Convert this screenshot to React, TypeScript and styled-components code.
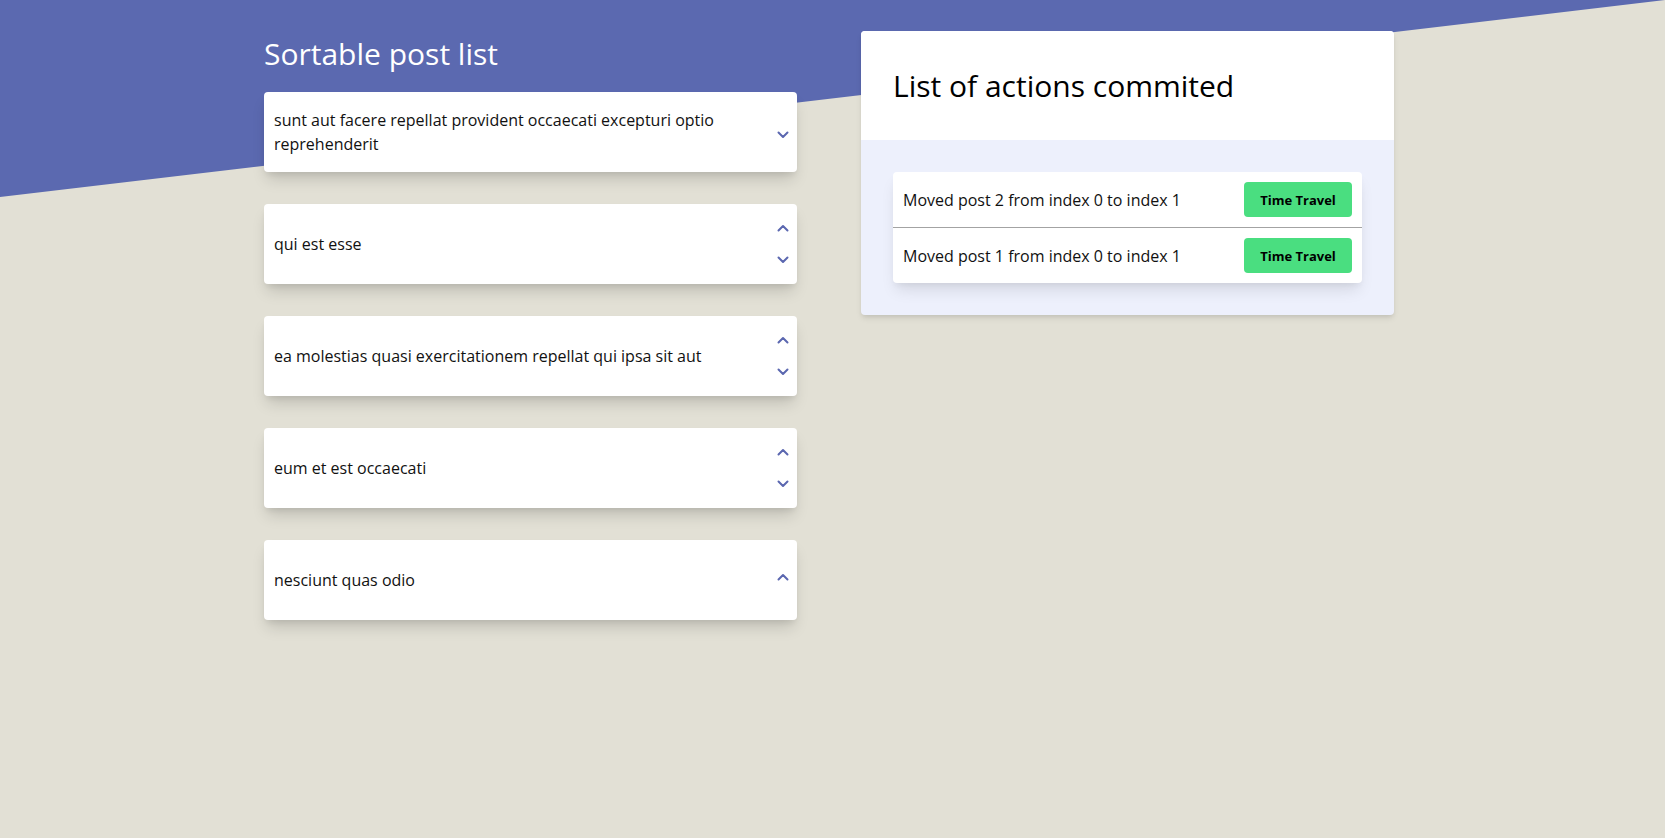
import React from "react";
import styled, { createGlobalStyle } from "styled-components";

const GlobalStyle = createGlobalStyle`
  *, *::before, *::after { box-sizing: border-box; }
  html, body { margin: 0; padding: 0; }
  body {
    background: #e2e0d5;
    font-family: "Open Sans", "Noto Sans", sans-serif;
    color: #111;
    min-height: 838px;
  }
`;

const Page = styled.div`
  position: relative;
  min-height: 838px;
  overflow: hidden;
  &::before {
    content: "";
    position: absolute;
    left: 0;
    top: 0;
    width: 100%;
    height: 197px;
    background: #5b69b0;
    clip-path: polygon(0 0, 100% 0, 0 100%);
    z-index: 0;
  }
`;

const Layout = styled.main`
  position: relative;
  z-index: 1;
  display: grid;
  grid-template-columns: 533px 533px;
  column-gap: 64px;
  align-items: start;
  padding: 31px 0 0 264px;
`;

const Column = styled.section`
  display: flex;
  flex-direction: column;
`;

const PageTitle = styled.h1`
  margin: 5px 0 20px;
  font-size: 30px;
  line-height: 36px;
  font-weight: 400;
  color: #fff;
`;

const PostList = styled.ul`
  list-style: none;
  margin: 0;
  padding: 0;
  display: flex;
  flex-direction: column;
  gap: 32px;
`;

const PostCard = styled.li`
  height: 80px;
  background: #fff;
  border-radius: 4px;
  box-shadow: 0 10px 15px -3px rgba(0, 0, 0, 0.15), 0 4px 6px -2px rgba(0, 0, 0, 0.08);
  display: flex;
  align-items: center;
  justify-content: space-between;
  padding: 0 0 0 10px;
`;

const PostTitle = styled.p`
  margin: 0;
  font-size: 16px;
  line-height: 24px;
  color: #111;
  max-width: 440px;
`;

const Arrows = styled.div`
  display: flex;
  flex-direction: column;
  justify-content: center;
  gap: 6px;
  width: 28px;
`;

const ArrowButton = styled.button`
  height: 26px;
  width: 28px;
  border: 0;
  background: transparent;
  padding: 0;
  display: flex;
  align-items: center;
  justify-content: center;
  color: #5b67b0;
  cursor: pointer;
`;

const Spacer = styled.span`
  display: block;
  height: 0;
`;

const Panel = styled.section`
  background: #edf0fc;
  border-radius: 4px;
  box-shadow: 0 4px 6px -1px rgba(0, 0, 0, 0.1), 0 2px 4px -1px rgba(0, 0, 0, 0.06);
  overflow: hidden;
`;

const PanelHeader = styled.header`
  height: 109px;
  background: #fff;
  display: flex;
  align-items: center;
  padding: 0 32px;
`;

const PanelTitle = styled.h2`
  margin: 0;
  font-size: 30px;
  line-height: 36px;
  font-weight: 400;
  color: #000;
`;

const PanelBody = styled.div`
  padding: 32px;
`;

const ActionList = styled.ul`
  list-style: none;
  margin: 0;
  padding: 0;
  background: #fff;
  border-radius: 4px;
  box-shadow: 0 10px 15px -3px rgba(0, 0, 0, 0.1), 0 4px 6px -2px rgba(0, 0, 0, 0.05);
`;

const ActionRow = styled.li<{ $divider?: boolean }>`
  display: flex;
  align-items: center;
  justify-content: space-between;
  padding: 10px;
  border-bottom: ${(p) => (p.$divider ? "1px solid #a3a3a3" : "0")};
`;

const ActionText = styled.span`
  font-size: 16px;
  line-height: 24px;
  color: #111;
`;

const TimeTravelButton = styled.button`
  height: 35px;
  width: 108px;
  border: 0;
  border-radius: 4px;
  background: #4ade80;
  color: #000;
  font-family: "Open Sans", "Noto Sans", sans-serif;
  font-weight: 700;
  font-size: 13px;
  line-height: 20px;
  cursor: pointer;
`;

const Chevron = ({ up }: { up?: boolean }) => (
  <svg width="12" height="8" viewBox="0 0 12 8" fill="none">
    <path
      d={up ? "M1.5 6.5 L6 2 L10.5 6.5" : "M1.5 1.5 L6 6 L10.5 1.5"}
      stroke="currentColor"
      strokeWidth="2"
      strokeLinecap="round"
      strokeLinejoin="round"
    />
  </svg>
);

const posts = [
  "sunt aut facere repellat provident occaecati excepturi optio reprehenderit",
  "qui est esse",
  "ea molestias quasi exercitationem repellat qui ipsa sit aut",
  "eum et est occaecati",
  "nesciunt quas odio",
];

const actions = [
  "Moved post 2 from index 0 to index 1",
  "Moved post 1 from index 0 to index 1",
];

export default function App() {
  return (
    <>
      <GlobalStyle />
      <Page>
        <Layout>
          <Column>
            <PageTitle>Sortable post list</PageTitle>
            <PostList>
              {posts.map((title, i) => (
                <PostCard key={title}>
                  <PostTitle>{title}</PostTitle>
                  <Arrows>
                    {i > 0 ? (
                      <ArrowButton aria-label="Move up">
                        <Chevron up />
                      </ArrowButton>
                    ) : (
                      <Spacer />
                    )}
                    {i < posts.length - 1 ? (
                      <ArrowButton aria-label="Move down">
                        <Chevron />
                      </ArrowButton>
                    ) : (
                      <Spacer />
                    )}
                  </Arrows>
                </PostCard>
              ))}
            </PostList>
          </Column>
          <Panel>
            <PanelHeader>
              <PanelTitle>List of actions commited</PanelTitle>
            </PanelHeader>
            <PanelBody>
              <ActionList>
                {actions.map((a, i) => (
                  <ActionRow key={a} $divider={i < actions.length - 1}>
                    <ActionText>{a}</ActionText>
                    <TimeTravelButton>Time Travel</TimeTravelButton>
                  </ActionRow>
                ))}
              </ActionList>
            </PanelBody>
          </Panel>
        </Layout>
      </Page>
    </>
  );
}
